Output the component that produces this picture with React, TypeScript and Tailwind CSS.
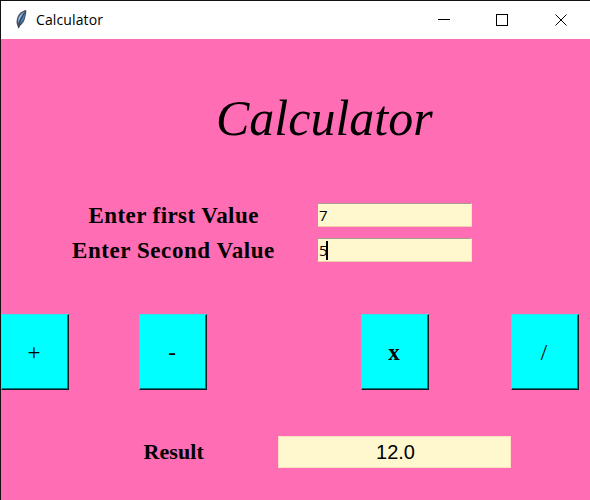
const serif = "font-['Liberation_Serif','Times_New_Roman',serif]";

function Feather() {
  return (
    <svg width="16" height="22" viewBox="0 0 16 22" className="shrink-0">
      <path d="M13.2 1 C9 1.6 5.4 4.8 4.3 8.6 C3.4 11.6 3.2 14.2 4.3 16.4 L5.6 19.8 L7 17 C9.6 14.8 11.4 12.3 12 9.5 C12.4 6.8 13.7 4 13.2 1Z" fill="#4a4f59" />
      <path d="M11.8 2.6 C8.4 4.2 5.8 7 5.2 10 L5 14.4 C6.2 11.2 8.4 7.2 11.8 2.6Z" fill="#8db9ea" />
      <path d="M12 3.6 C10 7.6 7.8 11.5 6.2 15.4 C9.4 12.8 10.9 10.4 11.2 8.4Z" fill="#4583ca" />
      <path d="M11.6 3.6 C8.6 7.4 6.6 12.2 5.6 19" fill="none" stroke="#27405f" strokeWidth="0.7" />
    </svg>
  );
}

function TitleBar() {
  return (
    <header className="flex h-[38px] items-center bg-white font-['Open_Sans','Noto_Sans',sans-serif]">
      <div className="ml-[12px] flex h-full items-center">
        <Feather />
      </div>
      <span className="ml-[7px] w-[100px] text-[14px] leading-[20px] tracking-[0.12px] text-black">Calculator</span>
      <svg width="130" height="14" viewBox="0 0 130 14" className="ml-auto mr-[22px] shrink-0" shapeRendering="crispEdges">
        <path d="M0 6.5H12" stroke="black" fill="none" />
        <rect x="58.5" y="1.5" width="11" height="11" stroke="black" fill="none" />
        <path d="M117.5 1.5L128.5 12.5M128.5 1.5L117.5 12.5" stroke="black" fill="none" shapeRendering="auto" />
      </svg>
    </header>
  );
}

function Field({ value, focused }: { value: string; focused?: boolean }) {
  return (
    <div className="flex h-[24px] w-[155px] items-center border border-t-[#a99d92] border-l-[#a99d92] border-r-[#ffdfcc] border-b-[#f1cda9] bg-[#fff8cf] pl-[1px]">
      <span className="w-[8px] font-['Open_Sans',sans-serif] text-[15px] leading-[20px] font-normal text-black">{value}</span>
      {focused && <span className="-ml-px h-[19px] w-[2px] bg-black" />}
    </div>
  );
}

function Key({ label, bold }: { label: string; bold?: boolean }) {
  return (
    <button className={`flex h-[76px] w-[68px] shrink-0 items-center justify-center border-t border-r border-b border-l border-t-[#25e5ee] border-l-[#25e5ee] border-r-[#051b20] border-b-[#051b20] bg-[#00ffff] pr-[2px] pt-px text-[23px] leading-[24px] text-black shadow-[inset_-1px_-1px_0_#007b80] ${serif} ${bold ? "font-bold" : ""}`}>
      {label}
    </button>
  );
}

export default function App() {
  return (
    <main className="flex h-[500px] w-[590px] flex-col overflow-hidden border-t border-l border-[#111] bg-[#ff6eb4]">
      <TitleBar />
      <h1 className={`mt-[49px] ml-[215px] h-[60px] text-[50px] leading-[60px] italic text-black ${serif}`}>Calculator</h1>
      <section className={`mt-[55px] grid grid-cols-[316px_155px] gap-y-[10px] text-[23px] font-bold text-black ${serif}`}>
        <label className="pl-[87.5px] leading-[25px] tracking-[0.42px] whitespace-nowrap">Enter first Value</label>
        <Field value="7" />
        <label className="pl-[71px] leading-[25px] tracking-[0.57px] whitespace-nowrap">Enter Second Value</label>
        <Field value="5" focused />
      </section>
      <section className="mt-[51px] flex">
        <Key label="+" />
        <div className="ml-[70px]"><Key label="-" /></div>
        <div className="ml-[154px]"><Key label="x" bold /></div>
        <div className="ml-[82px]"><Key label="/" /></div>
      </section>
      <section className="mt-[46px] flex h-[32px] items-center">
        <span className={`ml-[142.5px] w-[134.5px] text-[22px] leading-[32px] font-bold tracking-[0.1px] text-black ${serif}`}>Result</span>
        <output className="h-[32px] w-[233px] border border-[#ffdfc4] bg-[#fff8cf] pl-[2px] text-center font-['Liberation_Sans',Arial,sans-serif] text-[20px] leading-[31px] text-black">12.0</output>
      </section>
    </main>
  );
}
